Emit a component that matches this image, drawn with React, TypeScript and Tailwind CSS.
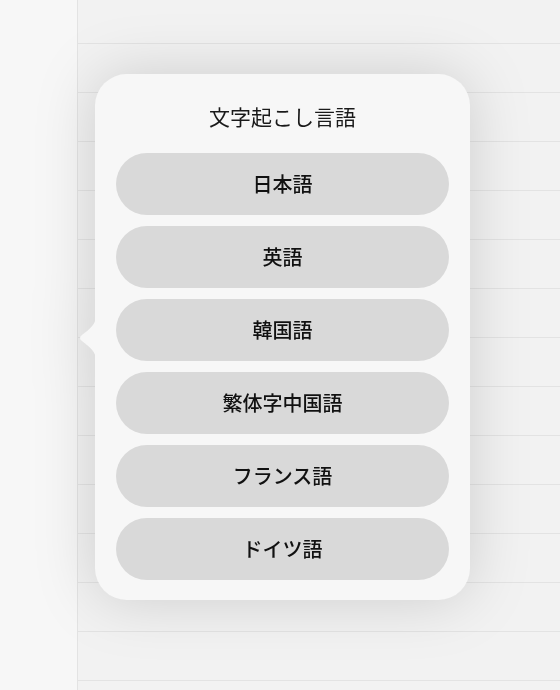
import React from 'react';

const languages = ['日本語', '英語', '韓国語', '繁体字中国語', 'フランス語', 'ドイツ語'];

export default function App() {
  // ruled rows of the page behind the popover
  const rows = Array.from({ length: 13 });

  return (
    <div
      className="relative w-[560px] h-[690px] overflow-hidden flex bg-[#f2f2f2]"
      style={{ fontFamily: '"Noto Sans CJK JP", "Noto Sans", sans-serif' }}
    >
      <div className="w-[78px] h-full bg-[#f7f7f7] border-r border-[#e3e3e3]" />
      <div className="flex-1 flex flex-col">
        <div className="h-[44px] shrink-0 border-b border-[#e3e3e3]" />
        {rows.map((_, i) => (
          <div key={i} className="h-[49px] shrink-0 border-b border-[#e3e3e3]" />
        ))}
      </div>

      {/* popover */}
      <div className="absolute left-[95px] top-[74px] w-[375px] drop-shadow-[0_0_30px_rgba(0,0,0,0.15)]">
        <svg
          className="absolute left-[-17px] top-[242px]"
          width="18"
          height="44"
          viewBox="0 0 18 44"
        >
          <path
            d="M18 0 C18 8 12 13 4 19 Q0 22 4 25 C12 31 18 36 18 44 Z"
            fill="#f7f7f7"
          />
        </svg>
        <div className="rounded-[32px] bg-[#f7f7f7] px-[21px] pt-[28px] pb-[20px]">
          <div className="h-[30px] mb-[21px] flex items-center justify-center text-[21px] text-[#1a1a1a]">
            文字起こし言語
          </div>
          <div className="flex flex-col gap-[11px]">
            {languages.map((lang) => (
              <button
                key={lang}
                className="h-[62px] rounded-full bg-[#d9d9d9] flex items-center justify-center text-[20px] font-medium text-[#111111]"
              >
                {lang}
              </button>
            ))}
          </div>
        </div>
      </div>
    </div>
  );
}
